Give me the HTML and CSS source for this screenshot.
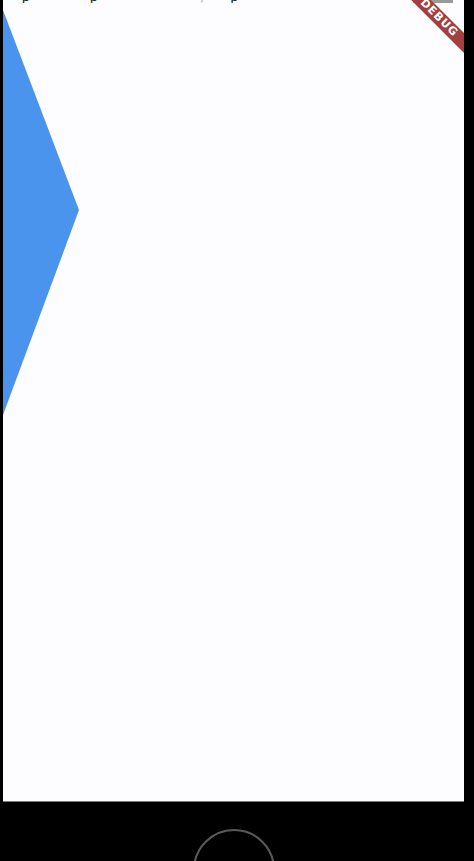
FILE: index.html
```html
<!DOCTYPE html>
<html>
<head>
<meta charset="utf-8">
<link rel="stylesheet" href="styles.css">
</head>
<body>
<div class="screen">
  <div class="topline">
    <span class="mark m1">p</span>
    <span class="mark m2">p</span>
    <span class="mark m3">,</span>
    <span class="mark m4">p</span>
    <span class="status"></span>
  </div>
  <div class="arrow"></div>
  <div class="banner">DEBUG</div>
</div>
<div class="bottom">
  <div class="home"></div>
</div>
</body>
</html>
```
FILE: styles.css
```css
html, body {
  margin: 0;
  padding: 0;
  background: #000;
  width: 474px;
  height: 861px;
  overflow: hidden;
}
.screen {
  position: relative;
  margin-left: 3px;
  width: 461px;
  height: 801px;
  background: #fdfcfe;
  border-bottom: 1px solid #7a7a7a;
  overflow: hidden;
}
.topline {
  display: flex;
  align-items: flex-end;
  height: 3px;
  overflow: hidden;
  font-family: "Roboto", "Liberation Sans", sans-serif;
  font-size: 14px;
  line-height: 16px;
  color: #222;
}
.mark {
  display: block;
  flex: none;
  height: 16px;
  margin-bottom: -1px;
}
.m1 { margin-left: 19px; }
.m2 { margin-left: 60px; }
.m3 { margin-left: 103px; color: #bbb; }
.m4 { margin-left: 27px; }
.status {
  display: block;
  margin-left: auto;
  margin-right: 11px;
  width: 40px;
  height: 3px;
  background: #9a9a9a;
}
.arrow {
  margin-top: 7px;
  width: 76px;
  height: 405px;
  background: #4a94ee;
  clip-path: polygon(0 0, 100% 49.4%, 0 100%);
}
.banner {
  position: absolute;
  left: 376px;
  top: 11px;
  width: 120px;
  height: 14px;
  transform: rotate(45deg);
  transform-origin: 50% 50%;
  background: #a33f40;
  color: #fff;
  font-family: "DejaVu Sans", "Liberation Sans", sans-serif;
  font-weight: 900;
  font-size: 11px;
  line-height: 14px;
  letter-spacing: 1px;
  text-align: center;
}
.bottom {
  height: 59px;
  overflow: hidden;
  box-sizing: border-box;
  padding-top: 27px;
  padding-left: 193px;
}
.home {
  width: 78px;
  height: 78px;
  border: 2px solid #5a5a5a;
  border-radius: 50%;
}
```
